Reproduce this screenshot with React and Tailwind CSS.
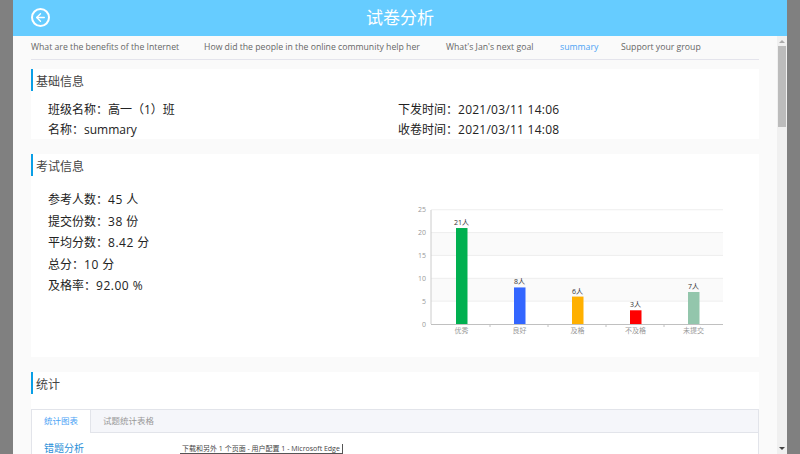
import { ArrowLeft } from "lucide-react";

const tabs = [
  { name: "What are the benefits of the Internet", w: "w-[173px]" },
  { name: "How did the people in the online community help her", w: "w-[242px]" },
  { name: "What's Jan's next goal", w: "w-[114px]" },
  { name: "summary", w: "w-[61px]", active: true },
  { name: "Support your group", w: "w-[100px]" },
];

const bars = [
  { label: "优秀", value: 21, text: "21人", x: 456, color: "#00b050" },
  { label: "良好", value: 8, text: "8人", x: 514, color: "#3366ff" },
  { label: "及格", value: 6, text: "6人", x: 572, color: "#ffb000" },
  { label: "不及格", value: 3, text: "3人", x: 630, color: "#ff0000" },
  { label: "未提交", value: 7, text: "7人", x: 688, color: "#93c6ac" },
];

const Title = ({ children }) => (
  <div className="h-[22px] border-l-2 border-[#0a9fe6] pl-[3px] text-[12px] leading-[25px] text-[#444]">
    {children}
  </div>
);

const Chart = () => {
  const y = (v) => 324 - v * 4.57;
  return (
    <svg width="330" height="140" viewBox="410 200 330 140" className="block">
      <rect x="431" y={y(20)} width="292" height={y(15) - y(20)} fill="#fafafa" />
      <rect x="431" y={y(10)} width="292" height={y(5) - y(10)} fill="#fafafa" />
      {[25, 20, 15, 10, 5].map((v) => (
        <line key={v} x1="431" x2="723" y1={y(v)} y2={y(v)} stroke="#eeeeee" strokeWidth="1" />
      ))}
      <line x1="431" x2="431" y1="210" y2="324" stroke="#cccccc" />
      <line x1="431" x2="723" y1="324.5" y2="324.5" stroke="#c0c0c0" />
      {[0, 5, 10, 15, 20, 25].map((v) => (
        <text key={v} x="426" y={y(v) + 2.5} textAnchor="end" fontSize="7" fill="#999">{v}</text>
      ))}
      {[490, 548, 606, 664].map((x) => (
        <line key={x} x1={x} x2={x} y1="324" y2="327" stroke="#c0c0c0" />
      ))}
      {bars.map((b) => (
        <g key={b.label}>
          <rect x={b.x} y={y(b.value)} width="11.5" height={324 - y(b.value)} fill={b.color} />
          <text x={b.x + 5.5} y={y(b.value) - 3} textAnchor="middle" fontSize="7" fill="#333">{b.text}</text>
          <text x={b.x + 5.5} y="333" textAnchor="middle" fontSize="7" fill="#999">{b.label}</text>
        </g>
      ))}
    </svg>
  );
};

export default function App() {
  return (
    <div className="flex h-[454px] w-[800px] overflow-hidden bg-[#808080] px-[13px] font-['Open_Sans','Noto_Sans_CJK_SC',sans-serif]">
      <div className="relative flex w-[774px] flex-col bg-[#fafafa]">
        {/* header */}
        <div className="relative flex h-[36px] shrink-0 items-center justify-center bg-[#66ccff] text-[17px] text-white">
          <div className="absolute left-[18px] top-[8px] flex h-[19px] w-[19px] items-center justify-center rounded-full border-2 border-white">
            <ArrowLeft size={13} strokeWidth={2.5} />
          </div>
          试卷分析
        </div>

        <div className="flex min-h-0 flex-1">
          <div className="w-[764px] px-[18px]">
            {/* tabs */}
            <div className="flex h-[24px] items-center border-b border-[#e4e4ec] pt-[1px] text-[8.7px] text-[#666]">
              {tabs.map((t) => (
                <div key={t.name} className={`${t.w} shrink-0 whitespace-nowrap ${t.active ? "text-[#4aa3f5]" : ""}`}>
                  {t.name}
                </div>
              ))}
            </div>

            {/* basic info */}
            <div className="mt-[9px] h-[70px] bg-white">
              <Title>基础信息</Title>
              <div className="grid grid-cols-[350px_1fr] pl-[17px] pt-[9px] text-[12px] leading-[20px] text-[#222]">
                <div>班级名称：高一（1）班</div>
                <div>下发时间：<span className="tracking-[0.25px]">2021/03/11 14:06</span></div>
                <div>名称：summary</div>
                <div>收卷时间：<span className="tracking-[0.25px]">2021/03/11 14:08</span></div>
              </div>
            </div>

            {/* exam info */}
            <div className="mt-[15px] flex h-[203px] flex-col bg-white">
              <Title>考试信息</Title>
              <div className="flex flex-1">
                <div className="w-[379px] pl-[17px] pt-[13px] text-[12px] leading-[21.5px] text-[#222]">
                  <div>参考人数：<span className="tracking-[0.5px]">45 人</span></div>
                  <div>提交份数：<span className="tracking-[0.5px]">38 份</span></div>
                  <div>平均分数：<span className="tracking-[0.5px]">8.42 分</span></div>
                  <div>总分：<span className="tracking-[0.5px]">10 分</span></div>
                  <div>及格率：<span className="tracking-[0.5px]">92.00 %</span></div>
                </div>
                <div className="pt-[24px]">
                  <Chart />
                </div>
              </div>
            </div>

            {/* stats */}
            <div className="mt-[15px] h-[82px] bg-white">
              <Title>统计</Title>
              <div className="mt-[15px] h-[60px] border-x border-t border-[#e2e4ea]">
                <div className="flex h-[23px] border-b border-[#e2e4ea] bg-[#f5f6fa] text-[8.5px] leading-[22px]">
                  <div className="h-[23px] w-[59px] border-r border-[#e2e4ea] bg-white text-center text-[#4aa3f5]">统计图表</div>
                  <div className="pl-[12px] text-[#999]">试题统计表格</div>
                </div>
                <div className="pl-[12px] pt-[8px] text-[10px] leading-[14px] text-[#2a8fd8]">错题分析</div>
              </div>
            </div>
          </div>

          {/* scrollbar */}
          <div className="flex w-[10px] shrink-0 flex-col items-center bg-[#f0f0f0]">
            <div className="mt-[4px] h-0 w-0 border-x-[3px] border-b-[3px] border-x-transparent border-b-[#aaa]" />
            <div className="mt-[3px] h-[81px] w-[8px] bg-[#bcbcbc]" />
            <div className="mt-auto mb-[4px] h-0 w-0 border-x-[3px] border-t-[3px] border-x-transparent border-t-[#444]" />
          </div>
        </div>

        {/* taskbar tooltip */}
        <div className="absolute left-[167px] top-[444px] h-[10px] whitespace-nowrap border-r border-b border-[#555] bg-white px-[2px] text-[7px] leading-[9px] text-[#444]">
          下载和另外 1 个页面 - 用户配置 1 - Microsoft Edge
        </div>
      </div>
    </div>
  );
}
